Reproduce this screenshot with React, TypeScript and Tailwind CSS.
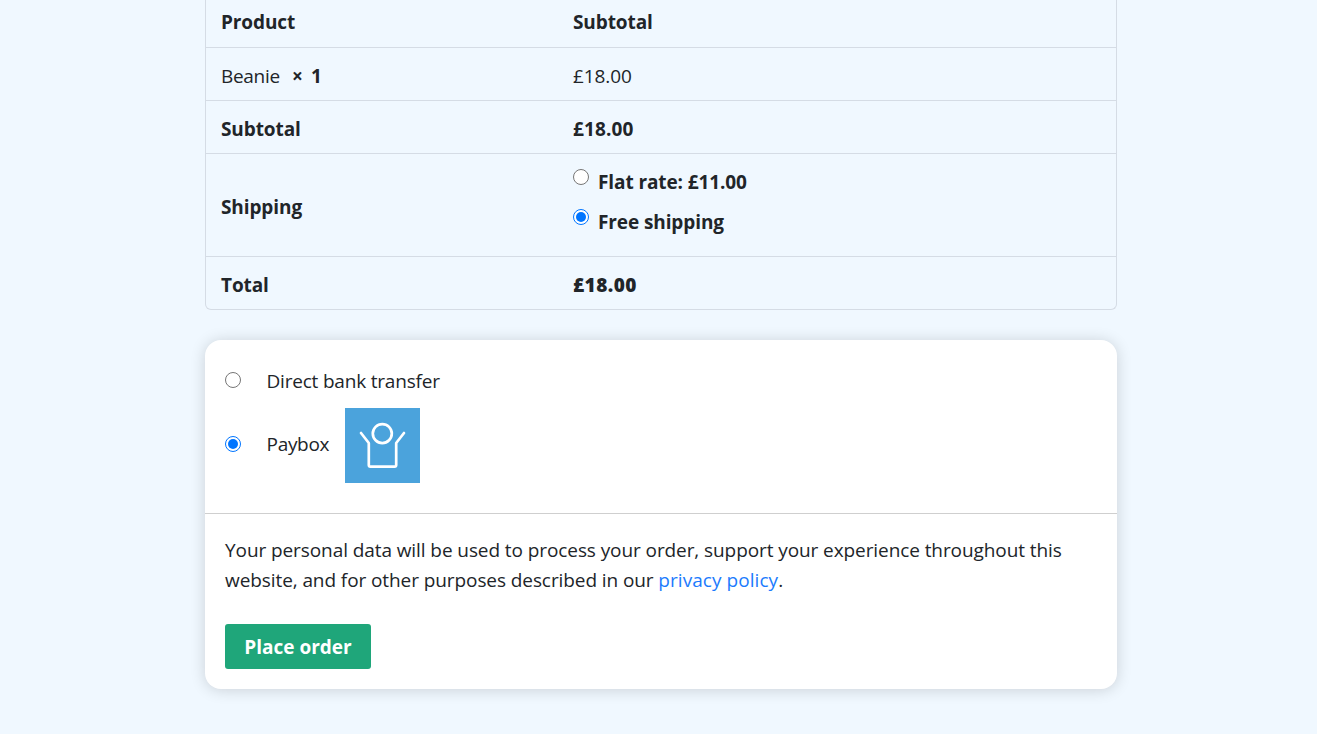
import { useState, type ReactNode } from 'react';

function Radio({ checked, onSelect, label }: { checked: boolean; onSelect: () => void; label: string }) {
  return (
    <button type="button" role="radio" aria-checked={checked} aria-label={label} onClick={onSelect} className="block size-4 shrink-0">
      <svg viewBox="0 0 16 16" className="size-4">
        <circle cx="8" cy="8" r="7.5" fill="#fff" stroke={checked ? '#0075ff' : '#767676'} />
        {checked && <circle cx="8" cy="8" r="5" fill="#0075ff" />}
      </svg>
    </button>
  );
}

function PayboxLogo() {
  return (
    <svg viewBox="0 0 75 75" className="size-[75px] bg-[#4ba3dc]" fill="none" stroke="#fff" strokeWidth="2.7" strokeLinecap="round" strokeLinejoin="round">
      <circle cx="37.3" cy="25.6" r="9.5" />
      <path d="M16 25 L23.8 35 V57 Q23.8 58.6 25.4 58.6 H49.6 Q51.2 58.6 51.2 57 V35 L59 25" />
    </svg>
  );
}

function Row({ label, children, height }: { label: ReactNode; children: ReactNode; height: string }) {
  return (
    <div className={`grid grid-cols-[352px_1fr] items-center border-b border-[#d5dce5] px-[15px] last:border-b-0 ${height}`}>
      <div>{label}</div>
      <div>{children}</div>
    </div>
  );
}

export default function App() {
  const [shipping, setShipping] = useState('free');
  const [payment, setPayment] = useState('paybox');

  return (
    <main className="h-[734px] overflow-hidden bg-[#f0f8ff] pl-[205px] font-['Open_Sans','Noto_Sans',sans-serif] text-[19px] leading-[30px] text-[#212529]">
      <section className="w-[912px] rounded-b-[6px] border border-t-0 border-[#d5dce5] font-bold tracking-[-0.1px]">
        <Row height="h-12 pb-[3px]" label="Product">Subtotal</Row>
        <Row
          height="h-[53px] pt-[3px]"
          label={
            <span className="flex">
              <span className="w-[59px] font-normal tracking-[-0.3px]">Beanie</span>
              <span className="ml-3 tracking-normal">×</span>
              <span className="ml-2 tracking-normal">1</span>
            </span>
          }
        >
          <span className="font-normal tracking-[-0.1px]">£18.00</span>
        </Row>
        <Row height="h-[53px] pt-[3px]" label="Subtotal"><span className="tracking-[0.15px]">£18.00</span></Row>
        <Row height="h-[103px] pt-[3px]" label="Shipping">
          <div role="radiogroup" className="flex flex-col gap-[10px] pb-[10px]">
            <div className="flex gap-[9px]">
              <div className="pt-0.5">
                <Radio label="Flat rate" checked={shipping === 'flat'} onSelect={() => setShipping('flat')} />
              </div>
              <span>Flat rate: £11.00</span>
            </div>
            <div className="flex gap-[9px]">
              <div className="pt-0.5">
                <Radio label="Free shipping" checked={shipping === 'free'} onSelect={() => setShipping('free')} />
              </div>
              <span>Free shipping</span>
            </div>
          </div>
        </Row>
        <Row height="h-[52px] pt-[3px]" label="Total">
          <span className="font-extrabold tracking-[0.45px]">£18.00</span>
        </Row>
      </section>

      <section className="mt-[30px] h-[349px] w-[912px] rounded-2xl bg-white tracking-[-0.085px] shadow-[0_1px_15px_rgba(0,0,0,0.16)]">
        <div role="radiogroup" className="h-[174px] border-b border-[#cfcfcf] px-5 pt-[25px]">
          <div className="flex h-[31px] items-start">
            <div className="pt-[7px]">
              <Radio label="Direct bank transfer" checked={payment === 'bank'} onSelect={() => setPayment('bank')} />
            </div>
            <span className="ml-[25.5px] pt-px tracking-[-0.2px]">Direct bank transfer</span>
          </div>
          <div className="mt-3 flex h-[75px] items-start">
            <div className="pt-7">
              <Radio label="Paybox" checked={payment === 'paybox'} onSelect={() => setPayment('paybox')} />
            </div>
            <span className="ml-[25.5px] w-[78.5px] pt-[21px] tracking-[-0.3px]">Paybox</span>
            <PayboxLogo />
          </div>
        </div>
        <div className="px-5 pt-[21px]">
          <p>
            Your personal data will be used to process your order, support your experience throughout this
            <br />
            website, and for other purposes described in our <a className="tracking-[0.05px] text-[#1c7bfd]">privacy policy</a>.
          </p>
          <button className="mt-[29px] block h-[45px] w-[146px] rounded-[3px] bg-[#1fa67a] font-bold tracking-normal text-white">Place order</button>
        </div>
      </section>
    </main>
  );
}
